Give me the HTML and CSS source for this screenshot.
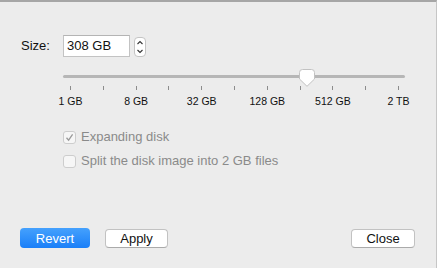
FILE: index.html
```html
<!DOCTYPE html>
<html lang="en">
<head>
    <meta charset="UTF-8">
    <meta name="viewport" content="width=device-width, initial-scale=1.0">
    <title>Disk Size</title>
    <link rel="stylesheet" href="styles.css">
</head>
<body>
    <div class="sheet">
        <div class="size-row">
            <label class="size-label" for="size">Size:</label>
            <div class="field" id="size">308 GB</div>
            <div class="stepper">
                <svg width="12" height="20" viewBox="0 0 12 20">
                    <path d="M3.5 7 L6 4.5 L8.5 7" fill="none" stroke="#333" stroke-width="1.1"/>
                    <path d="M3.5 13 L6 15.5 L8.5 13" fill="none" stroke="#333" stroke-width="1.1"/>
                </svg>
            </div>
        </div>

        <div class="slider">
            <div class="track"></div>
            <svg class="thumb" width="16" height="18" viewBox="0 0 16 18">
                <path d="M3.5 0.5 H12.5 Q15.5 0.5 15.5 3.5 V10 L8 17.3 L0.5 10 V3.5 Q0.5 0.5 3.5 0.5 Z" fill="#fff" stroke="#c2c2c2"/>
            </svg>
        </div>

        <div class="ticks">
            <span></span><span></span><span></span><span></span><span></span><span></span>
            <span></span><span></span><span></span><span></span><span></span>
        </div>

        <div class="scale">
            <span>1 GB</span>
            <span>8 GB</span>
            <span>32 GB</span>
            <span>128 GB</span>
            <span>512 GB</span>
            <span>2 TB</span>
        </div>

        <div class="options">
            <div class="option">
                <span class="check">
                    <svg width="11" height="11" viewBox="0 0 11 11">
                        <path d="M2.5 5.8 L4.6 8.2 L8.6 2.4" fill="none" stroke="#9a9a9a" stroke-width="1.3"/>
                    </svg>
                </span>
                <span>Expanding disk</span>
            </div>
            <div class="option">
                <span class="check"></span>
                <span>Split the disk image into 2 GB files</span>
            </div>
        </div>

        <div class="actions">
            <button class="btn btn-primary revert">Revert</button>
            <button class="btn apply">Apply</button>
            <button class="btn close">Close</button>
        </div>
    </div>
</body>
</html>
```

FILE: styles.css
```css
html, body {
    margin: 0;
    padding: 0;
    height: 100%;
}

body {
    font-family: "Liberation Sans", Arial, sans-serif;
    font-size: 13px;
    color: #111;
    background-color: #ececec;
}

.sheet {
    box-sizing: border-box;
    height: 100%;
    border-top: 2px solid #a6a6a6;
    border-right: 1px solid #c6c6c6;
    display: flex;
    flex-direction: column;
    padding: 33px 21px 20px 0;
}

/* size field row */
.size-row {
    display: flex;
    align-items: flex-start;
    padding-left: 21px;
}

.size-label {
    width: 42px;
    line-height: 22px;
}

.field {
    box-sizing: border-box;
    width: 67px;
    height: 22px;
    line-height: 20px;
    padding-left: 3px;
    background: #fff;
    border: 1px solid #c3c3c3;
    border-top-color: #b4b4b4;
}

.stepper {
    box-sizing: border-box;
    width: 12px;
    height: 20px;
    margin: 2px 0 0 4px;
    background: #fff;
    border: 1px solid #c4c4c4;
    border-radius: 4px;
    display: flex;
    align-items: center;
    justify-content: center;
}

.stepper svg {
    flex: none;
}

/* slider */
.slider {
    position: relative;
    margin: 18px 0 0 63px;
    width: 342px;
    height: 3px;
}

.track {
    height: 3px;
    border-radius: 2px;
    background: #b6b6b6;
}

.thumb {
    position: absolute;
    left: 236px;
    top: -6px;
}

.ticks {
    display: flex;
    justify-content: space-between;
    margin: 8px 0 0 70px;
    width: 329px;
    height: 4px;
}

.ticks span {
    width: 1px;
    background: #8c8c8c;
}

.scale {
    display: flex;
    justify-content: space-between;
    margin: 5px 0 0 70px;
    width: 329px;
    font-size: 10.5px;
    line-height: 12px;
    color: #111;
}

.scale span {
    width: 1px;
    display: flex;
    justify-content: center;
    white-space: nowrap;
}

/* checkboxes */
.options {
    display: flex;
    flex-direction: column;
    gap: 8px;
    margin: 22px 0 0 63px;
    color: #8a8a8a;
}

.option {
    display: flex;
    align-items: center;
    gap: 5px;
    line-height: 16px;
}

.check {
    box-sizing: border-box;
    width: 13px;
    height: 13px;
    border: 1px solid #cdcdcd;
    border-radius: 3px;
    background: #f6f6f6;
    display: flex;
    align-items: center;
    justify-content: center;
}

/* buttons */
.actions {
    margin-top: auto;
    display: flex;
    align-items: flex-start;
    padding-left: 20px;
}

.btn {
    box-sizing: border-box;
    font-family: inherit;
    font-size: 13px;
    height: 19px;
    line-height: 17px;
    padding: 0;
    color: #111;
    background: #fff;
    border: 1px solid #c2c2c2;
    border-bottom-color: #aaa;
    border-radius: 4px;
}

.btn-primary {
    height: 20px;
    color: #fff;
    border: none;
    background: linear-gradient(#45a1fd, #1a7ff8);
}

.revert {
    width: 70px;
}

.apply {
    width: 63px;
    margin: 1px 0 0 15px;
}

.close {
    width: 64px;
    margin: 1px 0 0 auto;
}
```
